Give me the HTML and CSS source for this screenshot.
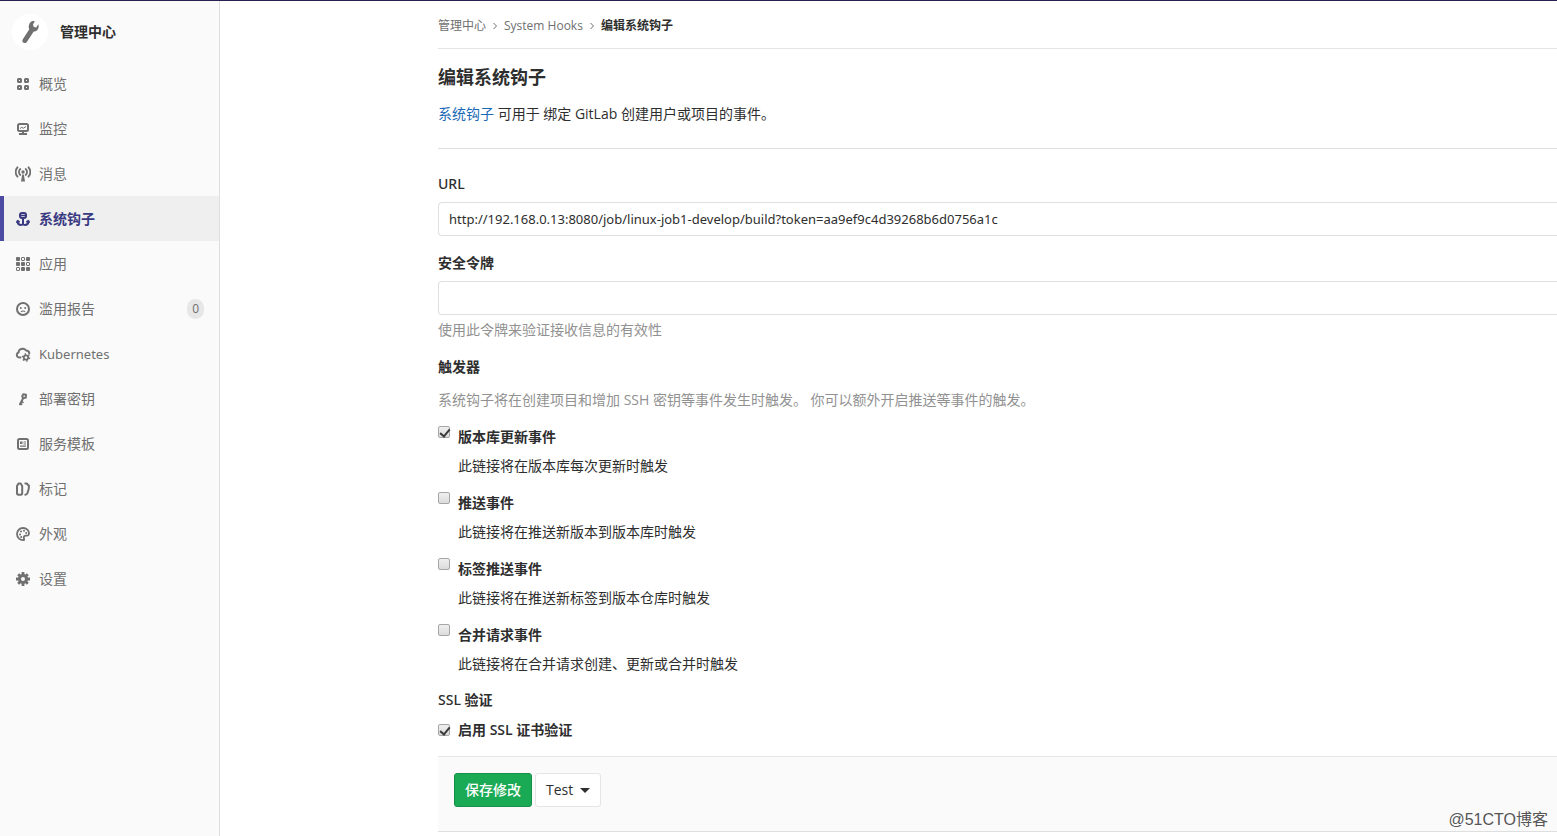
FILE: index.html
```html
<!DOCTYPE html>
<html lang="zh-CN">
<head>
<meta charset="utf-8">
<title>编辑系统钩子 · 管理中心</title>
<link rel="stylesheet" href="styles.css">
</head>
<body>
<div class="layout">
  <aside class="sidebar">
    <a class="context" href="#">
      <span class="avatar">
        <svg width="18" height="24" viewBox="0 0 18 24"><path fill="#707070" d="M10.900 1.300c.9-.4 2-.5 2.900-.2l-1.900 3.700 1 2.300 2.300.4 2.100-3.300c.6 1.600.5 3.500-.4 5-.9 1.500-2.500 2.300-4.200 2.300L6 21.700c-.7 1.300-2.200 1.700-3.400 1.100-1.200-.7-1.600-2.100-.9-3.400L8.300 9.200C7.600 7.700 7.500 6 8.200 4.400 8.700 3 9.700 1.900 10.900 1.300z"/></svg>
      </span>
      <span class="context-title">管理中心</span>
    </a>
    <nav>
      <ul class="menu">
        <li><a class="item" href="#"><svg class="icon" viewBox="0 0 16 16"><g fill="none" stroke="currentColor" stroke-width="2"><rect x="3" y="3" width="3" height="3" rx=".5"/><rect x="10" y="3" width="3" height="3" rx=".5"/><rect x="3" y="10" width="3" height="3" rx=".5"/><rect x="10" y="10" width="3" height="3" rx=".5"/></g></svg><span>概览</span></a></li>
        <li><a class="item" href="#"><svg class="icon" viewBox="0 0 16 16"><g fill="none" stroke="currentColor" stroke-width="2"><rect x="3" y="3" width="10" height="7" rx="1.500"/><path d="M4 13h8M8 10v3"/><path stroke-width="1" d="M5 7.500l1.800-1.200 1.400 1L11 5.500"/></g></svg><span>监控</span></a></li>
        <li><a class="item" href="#"><svg class="icon" viewBox="0 0 16 16"><circle cx="8" cy="6" r="1.700" fill="currentColor"/><path fill="currentColor" d="M7.200 8.500h1.600L10 15.500H6z"/><g fill="none" stroke="currentColor" stroke-width="1.800" stroke-linecap="round"><path d="M5.300 9a4 4 0 0 1 0-6M10.700 9a4 4 0 0 0 0-6M2.500 10.700a7 7 0 0 1 0-9.400M13.500 10.700a7 7 0 0 0 0-9.400"/></g></svg><span>消息</span></a></li>
        <li><a class="item active" href="#" aria-current="page"><svg class="icon" viewBox="0 0 16 16"><g fill="none" stroke="currentColor" stroke-width="2" stroke-linecap="round" stroke-linejoin="round"><rect x="5" y="2" width="6" height="5" rx="2"/><path stroke-width="1.500" d="M5 4.500h6"/><path d="M8 7v6M2.500 10.500c.3 2.300 1.600 3.500 3.500 3.500 1 0 1.600-.4 2-1 .4.600 1 1 2 1 1.900 0 3.200-1.200 3.500-3.500"/><path stroke-width="1.500" d="M1.800 11.200l1-1.600 1.500 1.200M14.200 11.200l-1-1.600-1.500 1.200"/></g></svg><span>系统钩子</span></a></li>
        <li><a class="item" href="#"><svg class="icon" viewBox="0 0 16 16"><g fill="currentColor"><rect x="1" y="1" width="4" height="4" rx="1"/><rect x="11" y="1" width="4" height="4" rx="1"/><rect x="1" y="6" width="4" height="4" rx="1"/><rect x="6" y="6" width="4" height="4" rx="1"/><rect x="6" y="11" width="4" height="4" rx="1"/><rect x="11" y="11" width="4" height="4" rx="1"/></g><g fill="none" stroke="currentColor"><rect x="6.500" y="1.500" width="3" height="3" rx=".5"/><rect x="11.500" y="6.500" width="3" height="3" rx=".5"/><rect x="1.500" y="11.500" width="3" height="3" rx=".5"/></g></svg><span>应用</span></a></li>
        <li><a class="item" href="#"><svg class="icon" viewBox="0 0 16 16"><circle cx="8" cy="8" r="6" fill="none" stroke="currentColor" stroke-width="2"/><circle cx="5.800" cy="7" r="1" fill="currentColor"/><circle cx="10.200" cy="7" r="1" fill="currentColor"/><path d="M6 10.800c1-1.100 3-1.100 4 0" fill="none" stroke="currentColor" stroke-width="1.200"/></svg><span>滥用报告</span><span class="count">0</span></a></li>
        <li><a class="item" href="#"><svg class="icon" viewBox="0 0 16 16"><path d="M5.500 11.500C3.300 11.800 1.800 10.600 1.800 8.800c0-1.200.8-2 1.700-2.300.2-2.600 2.200-4 4.600-3.800 1.400.1 2.500.8 3.200 1.800 1.900.2 3 1.300 3 2.900" fill="none" stroke="currentColor" stroke-width="2" stroke-linecap="round"/><circle cx="11" cy="11.500" r="2.200" fill="none" stroke="currentColor" stroke-width="1.800"/><circle cx="11" cy="11.500" r="3.500" fill="none" stroke="currentColor" stroke-width="1.500" stroke-dasharray="1.500 2.170"/></svg><span class="latin">Kubernetes</span></a></li>
        <li><a class="item" href="#"><svg class="icon" viewBox="0 0 16 16"><g fill="none" stroke="currentColor" stroke-linecap="round" stroke-linejoin="round"><path stroke-width="2" d="M8.300 3.200l2.700.6-.3 3-2.600.3-.9-1.800zM8 7.500L5 13.300"/><path stroke-width="1.600" d="M6.600 10.800l1.400.7M5.400 12.800l1.300.6"/></g></svg><span>部署密钥</span></a></li>
        <li><a class="item" href="#"><svg class="icon" viewBox="0 0 16 16"><rect x="3" y="3" width="10" height="10" rx="1.500" fill="none" stroke="currentColor" stroke-width="2"/><path fill="currentColor" d="M5 5.500h2.500V8H5zM8.500 5.500H11v1H8.500zM8.500 7.500H11v1H8.500zM5 9.500h6v1.300H5z"/></svg><span>服务模板</span></a></li>
        <li><a class="item" href="#"><svg class="icon" viewBox="0 0 16 16"><g fill="none" stroke="currentColor" stroke-width="2" stroke-linejoin="round" stroke-linecap="round"><path d="M2 5l1.500-2.500h2.200L7.200 5v7c0 1-.5 1.700-1.500 1.700H3.500C2.500 13.700 2 13 2 12z"/><path d="M10.300 2.500h1.500L14 5l-.3 3-1.200 4c-.3 1-1 1.700-2.200 1.700"/></g></svg><span>标记</span></a></li>
        <li><a class="item" href="#"><svg class="icon" viewBox="0 0 16 16"><path d="M9 14C5 14.500 2 11.700 2 8a6 6 0 0 1 6-6c3.500 0 6.200 2.500 6 5.500-.1 1.500-1 2.300-2.400 2.200-1.400-.1-2.700.2-2.900 1.500-.1 1 .9 1.800.3 2.800z" fill="none" stroke="currentColor" stroke-width="1.800" stroke-linejoin="round"/><g fill="currentColor"><circle cx="5" cy="8.500" r="1"/><circle cx="6" cy="5.500" r="1"/><circle cx="9" cy="4.700" r="1"/><circle cx="11.200" cy="7" r="1"/><circle cx="6.200" cy="11" r="1"/></g></svg><span>外观</span></a></li>
        <li><a class="item" href="#"><svg class="icon" viewBox="0 0 16 16"><circle cx="8" cy="8" r="3.500" fill="none" stroke="currentColor" stroke-width="3"/><g stroke="currentColor" stroke-width="2.800"><path d="M8 1v3M8 12v3M1 8h3M12 8h3M3.200 3.200l2 2M10.800 10.800l2 2M3.200 12.800l2-2M10.800 5.200l2-2"/></g></svg><span>设置</span></a></li>
      </ul>
    </nav>
  </aside>

  <main class="content">
    <nav class="breadcrumbs" aria-label="Breadcrumb">
      <a href="#">管理中心</a>
      <svg class="chevron" viewBox="0 0 8 8"><path d="M2.500 1l3 3-3 3"/></svg>
      <a href="#">System Hooks</a>
      <svg class="chevron" viewBox="0 0 8 8"><path d="M2.500 1l3 3-3 3"/></svg>
      <strong>编辑系统钩子</strong>
    </nav>
    <h1 class="title">编辑系统钩子</h1>
    <p class="intro"><a href="#">系统钩子</a> 可用于 绑定 GitLab 创建用户或项目的事件。</p>

    <form class="form">
      <div class="field">
        <label for="url">URL</label>
        <input id="url" class="control latin" type="text" value="http://192.168.0.13:8080/job/linux-job1-develop/build?token=aa9ef9c4d39268b6d0756a1c">
      </div>
      <div class="field">
        <label class="strong" for="token">安全令牌</label>
        <input id="token" class="control latin" type="text">
        <p class="help">使用此令牌来验证接收信息的有效性</p>
      </div>
      <fieldset class="triggers">
        <legend class="strong">触发器</legend>
        <p class="lead">系统钩子将在创建项目和增加 SSH 密钥等事件发生时触发。 你可以额外开启推送等事件的触发。</p>
        <div class="check">
          <input id="repo" type="checkbox" checked>
          <div><label for="repo">版本库更新事件</label><p>此链接将在版本库每次更新时触发</p></div>
        </div>
        <div class="check">
          <input id="push" type="checkbox">
          <div><label for="push">推送事件</label><p>此链接将在推送新版本到版本库时触发</p></div>
        </div>
        <div class="check">
          <input id="tag" type="checkbox">
          <div><label for="tag">标签推送事件</label><p>此链接将在推送新标签到版本仓库时触发</p></div>
        </div>
        <div class="check">
          <input id="merge" type="checkbox">
          <div><label for="merge">合并请求事件</label><p>此链接将在合并请求创建、更新或合并时触发</p></div>
        </div>
      </fieldset>
      <fieldset class="ssl">
        <legend>SSL <span class="strong">验证</span></legend>
        <div class="check single">
          <input id="ssl" type="checkbox" checked>
          <label for="ssl">启用 SSL 证书验证</label>
        </div>
      </fieldset>
      <div class="actions">
        <button class="btn primary" type="submit">保存修改</button>
        <button class="btn" type="button">Test <span class="caret"></span></button>
      </div>
    </form>
  </main>
</div>
<div class="watermark">@51CTO博客</div>
</body>
</html>
```
FILE: styles.css
```css
* { box-sizing: border-box; }

body {
  margin: 0;
  min-height: 100vh;
  position: relative;
  border-top: 1px solid #292052;
  background: #fff;
  color: #2e2e2e;
  font: 14px/20px "Open Sans", "Noto Sans CJK SC", sans-serif;
  overflow-x: hidden;
}

a { color: inherit; text-decoration: none; }
p, ul, h1 { margin: 0; }
ul { padding: 0; list-style: none; }

.layout { display: flex; min-height: calc(100vh - 1px); }

.sidebar {
  flex: none;
  width: 220px;
  background: #fafafa;
  border-right: 1px solid #dfdfdf;
}

.context {
  display: flex;
  align-items: center;
  gap: 12px;
  height: 60px;
  padding: 2px 0 0 12px;
  color: #2e2e2e;
}

.context-title { font-weight: 600; }

.avatar {
  display: flex;
  align-items: center;
  justify-content: center;
  width: 36px;
  height: 36px;
  border-radius: 50%;
  background: #fff;
}

.item {
  display: flex;
  align-items: center;
  gap: 8px;
  height: 45px;
  padding: 0 15px;
  color: #707070;
}

.item.active {
  padding-left: 11px;
  border-left: 4px solid #4b4ba3;
  background: #efefef;
  color: #393982;
  font-weight: 600;
}

.icon { width: 16px; height: 16px; }

.count {
  margin-left: auto;
  padding: 0 5px;
  border-radius: 10px;
  background: #e7e7e7;
  font-size: 12px;
}

.content { flex: 1; min-width: 0; padding-left: 218px; }

.breadcrumbs {
  display: flex;
  align-items: center;
  height: 48px;
  padding-top: 2px;
  border-bottom: 1px solid #e5e5e5;
  color: #707070;
  font-size: 12px;
}

.breadcrumbs strong { color: #2e2e2e; font-weight: 600; }

.chevron {
  width: 8px;
  height: 8px;
  margin: 0 5px;
  fill: none;
  stroke: #707070;
}

.title {
  padding: 16px 0 12px;
  font-size: 18px;
  line-height: 24px;
  font-weight: 600;
}

.intro {
  padding: 3px 0 24px;
  border-bottom: 1px solid #dfdfdf;
}

.intro a { color: #1b69b6; }

.form { padding-top: 24px; }
.field { margin-bottom: 16px; }

.field label, legend {
  display: block;
  font-family: "Noto Sans", "Noto Sans CJK SC", sans-serif;
  font-weight: 500;
}

.field label { padding-top: 1px; margin-bottom: 8px; }
.field .strong, .strong { font-weight: 600; }

.control {
  display: block;
  width: 100%;
  height: 34px;
  padding: 6px 10px;
  border: 1px solid #dfdfdf;
  border-right: 0;
  border-radius: 4px 0 0 4px;
  background: #fff;
  color: #2e2e2e;
}

.latin { font: 13px/20px "Noto Sans", "Noto Sans CJK SC", sans-serif; }

.help { margin-top: 5px; padding-bottom: 1px; color: #919191; }

fieldset { margin: 0; padding: 0; border: 0; }
legend { padding: 0; }
.lead { padding: 13px 0 16px; color: #919191; }

.check { display: flex; gap: 8px; margin-bottom: 16px; }
.check label { display: block; line-height: 22px; font-weight: 600; }
.check p { margin-top: 8px; }

.check input {
  flex: none;
  appearance: none;
  width: 12px;
  height: 12px;
  margin: 0;
  border: 1px solid #a6a6a6;
  border-radius: 2px;
  background: linear-gradient(#efefef, #dcdcdc);
}

.check input:checked::after {
  content: "";
  display: block;
  width: 4px;
  height: 8px;
  margin-left: 3px;
  border: solid #3c3c3c;
  border-width: 0 2px 2px 0;
  transform: rotate(40deg);
}

.ssl { padding-top: 1px; }
.check.single { align-items: center; padding-top: 8px; margin-bottom: 15px; }

.actions {
  display: flex;
  gap: 3px;
  padding: 16px 16px 24px;
  border-top: 1px solid #e5e5e5;
  border-bottom: 1px solid #dfdfdf;
  background: #fafafa;
}

.btn {
  display: flex;
  align-items: center;
  height: 34px;
  padding: 0 10px;
  border: 1px solid #e5e5e5;
  border-radius: 3px;
  background: #fff;
  color: #2e2e2e;
  font: inherit;
}

.btn.primary {
  border-color: #168f48;
  background: #1aaa55;
  color: #fff;
  font-weight: 500;
}

.caret {
  margin-left: 7px;
  border: 5px solid transparent;
  border-top-color: #2e2e2e;
  border-bottom: 0;
}

.watermark {
  position: absolute;
  right: 9px;
  bottom: 6px;
  color: #555;
  font: 16px/20px "Liberation Sans", "Noto Sans CJK SC", sans-serif;
  text-shadow: 0 0 2px #fff;
}
```
